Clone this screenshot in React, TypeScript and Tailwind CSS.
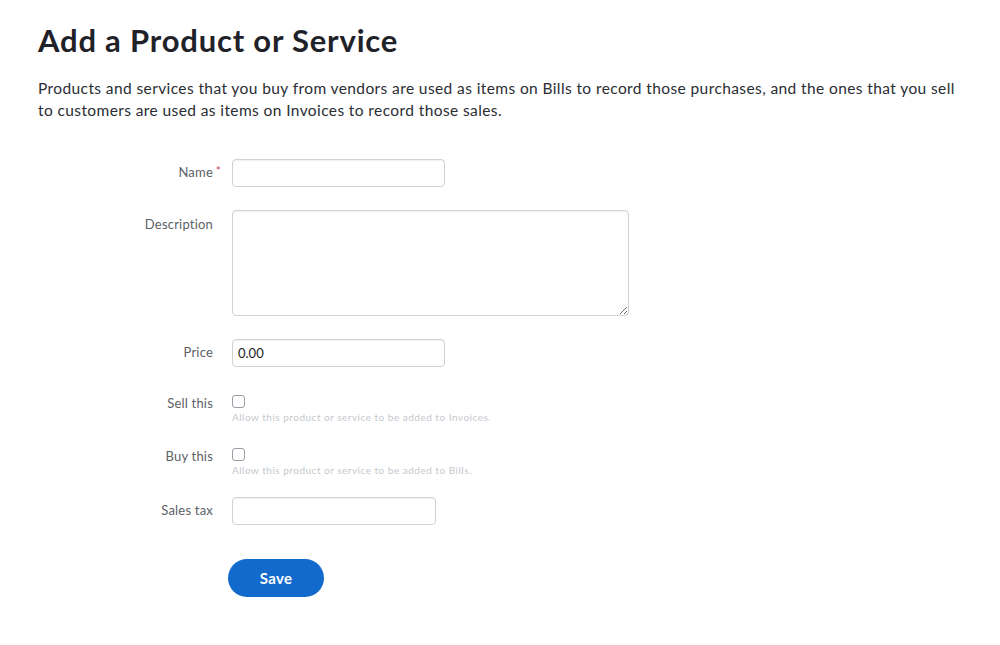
import { useState } from "react";

function Row({
    label,
    required,
    top,
    children,
}: {
    label: string;
    required?: boolean;
    top?: boolean;
    children: React.ReactNode;
}) {
    return (
        <div className={`flex ${top ? "items-start" : "items-center"}`}>
            <div className={`w-[175px] shrink-0 text-right text-[13px] tracking-[0.2px] text-[#5b5f66] relative ${top ? "pt-[5px]" : ""}`}>
                {label}
                {required && <span className="absolute -right-[8px] top-[0px] text-[#d2344f] text-[11px]">*</span>}
            </div>
            <div className="ml-[19px]">{children}</div>
        </div>
    );
}

function CheckRow({ label, help }: { label: string; help: string }) {
    const [on, setOn] = useState(false);
    return (
        <div className="flex items-start">
            <div className="w-[175px] shrink-0 text-right text-[13px] tracking-[0.2px] text-[#5b5f66] leading-[14px] pt-[1px]">{label}</div>
            <div className="ml-[19px] flex flex-col">
                <input
                    type="checkbox"
                    checked={on}
                    onChange={() => setOn(!on)}
                    className="appearance-none w-[13px] h-[13px] border border-[#9a9da3] rounded-[3px] bg-white m-0 checked:bg-[#136acd]"
                />
                <span className="text-[10px] tracking-[0.5px] text-[#c6c8cc] mt-[3px] leading-[12px]">{help}</span>
            </div>
        </div>
    );
}

const inputCls =
    "block h-[28px] rounded-[4px] border border-[#cfd1d5] bg-white px-[5px] text-[13px] text-[#1c1e22] outline-none shadow-[inset_0_1px_1px_rgba(0,0,0,0.06)]";

export default function App() {
    const [price, setPrice] = useState("0.00");

    return (
        <main className="min-h-[645px] bg-white pl-[38px] pr-[30px] pt-[22px] font-['Lato',sans-serif] text-[#1f2329]">
            <h1 className="text-[31px] font-bold leading-[36px] tracking-[0.8px]">Add a Product or Service</h1>
            <p className="mt-[19px] text-[15.5px] leading-[22px] tracking-[0.4px] text-[#2a2d33] max-w-[925px]">
                Products and services that you buy from vendors are used as items on Bills to record those purchases, and the ones that you sell to customers are used as items on Invoices to record those sales.
            </p>

            <div className="mt-[38px] flex flex-col">
                <Row label="Name" required>
                    <input className={`${inputCls} w-[213px]`} />
                </Row>
                <div className="mt-[23px]">
                    <Row label="Description" top>
                        <textarea className={`${inputCls} w-[397px] h-[106px] resize-y`} />
                    </Row>
                </div>
                <div className="mt-[23px]">
                    <Row label="Price">
                        <input
                            className={`${inputCls} w-[213px]`}
                            value={price}
                            onChange={(e) => setPrice(e.target.value)}
                        />
                    </Row>
                </div>
                <div className="mt-[28px]">
                    <CheckRow label="Sell this" help="Allow this product or service to be added to Invoices." />
                </div>
                <div className="mt-[25px]">
                    <CheckRow label="Buy this" help="Allow this product or service to be added to Bills." />
                </div>
                <div className="mt-[21px]">
                    <Row label="Sales tax">
                        <input className={`${inputCls} w-[204px]`} />
                    </Row>
                </div>
                <div className="mt-[34px] ml-[190px]">
                    <button className="w-[96px] h-[38px] rounded-full bg-[#136acd] text-white text-[15px] font-bold tracking-[0.3px]">
                        Save
                    </button>
                </div>
            </div>
        </main>
    );
}
